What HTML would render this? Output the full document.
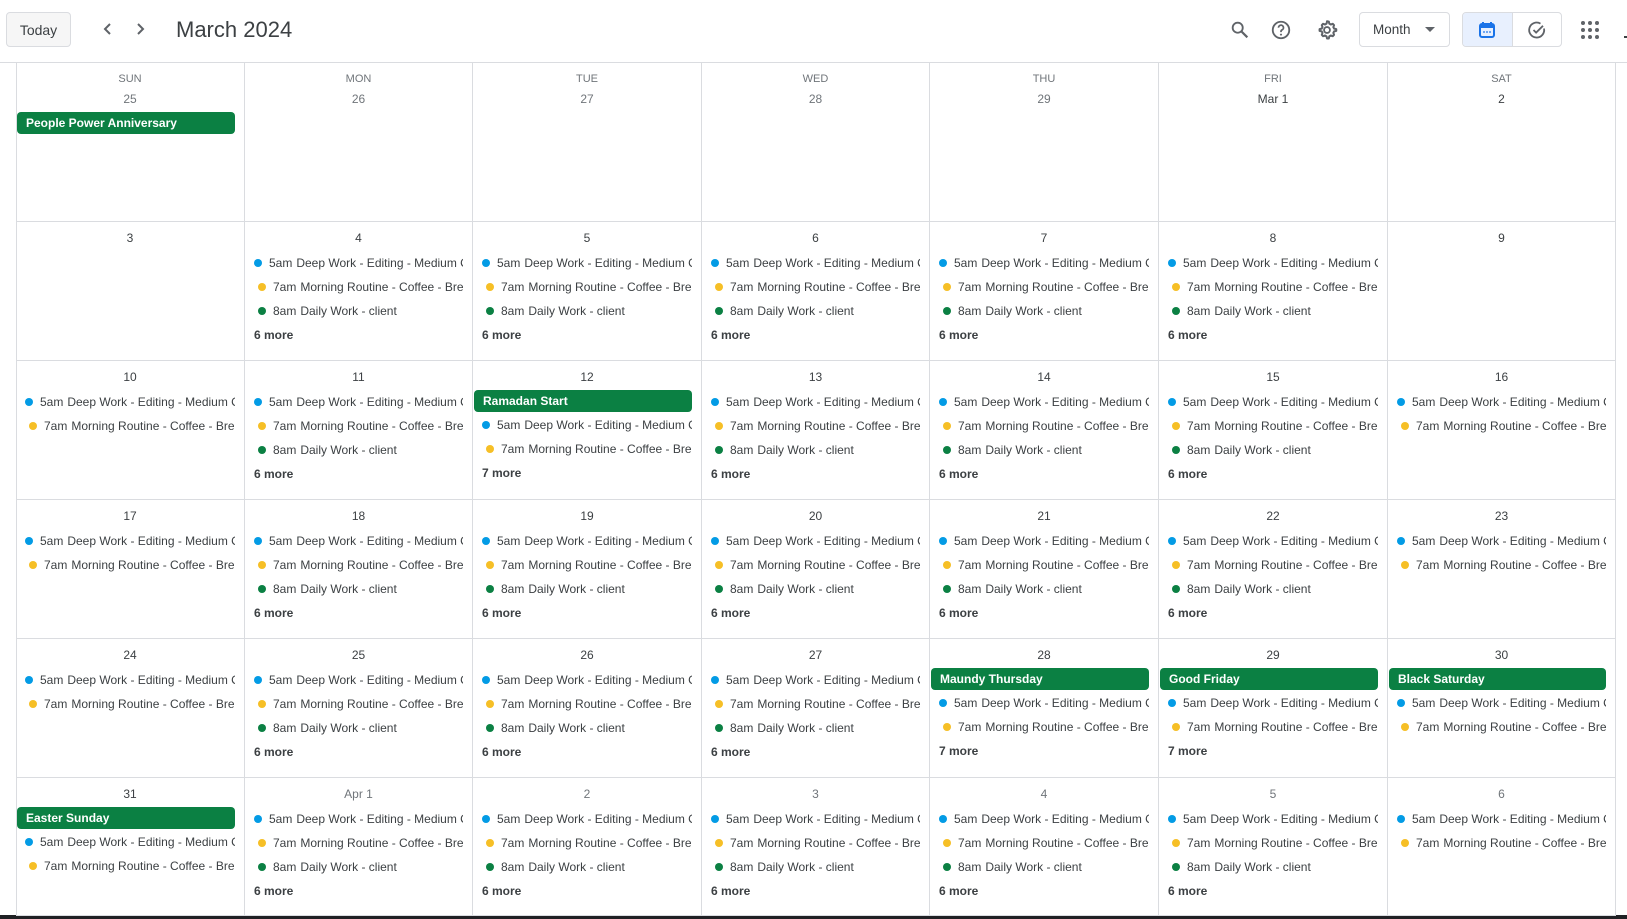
<!DOCTYPE html>
<html><head><meta charset="utf-8"><style>
*{box-sizing:border-box;margin:0;padding:0}
body{width:1627px;height:919px;overflow:hidden;background:#fff;font-family:"Liberation Sans",Arial,sans-serif;color:#3c4043;position:relative}
.hb{position:absolute;border:1px solid #dadce0;border-radius:4px;font-size:14px;display:flex;align-items:center;justify-content:center}
.c{position:absolute;border-right:1px solid #dadce0;border-bottom:1px solid #dadce0;overflow:hidden}
.dn{text-align:center;font-size:11px;color:#70757a;height:14px;line-height:14px;margin-top:9px}
.d{text-align:center;font-size:12px;height:16px;line-height:16px;margin-top:8px;margin-bottom:5px}
.r1 .d{margin-top:5px;margin-bottom:5px}
.g1 .d{color:#70757a}
.e{height:24px;line-height:24px;font-size:12px;white-space:nowrap;overflow:hidden;padding-left:24px;margin-right:9px;position:relative;color:#3c4043}
.e i{position:absolute;left:9px;top:8px;width:8px;height:8px;border-radius:50%;background:#039be5}
.e.y{padding-left:28px}
.e.y i{left:13px;background:#f6bf26}
.e.y i.g{background:#0b8043}
.e s{text-decoration:none;color:#3c4043;margin-left:4px}
.m{height:24px;line-height:24px;font-size:12px;font-weight:bold;padding-left:9px;color:#3c4043}
.ch{height:22px;line-height:22px;margin:1px 9px 1px 1px;background:#0b8043;color:#fff;font-weight:bold;font-size:12px;padding-left:9px;border-radius:4px;white-space:nowrap;overflow:hidden}
</style></head><body>
<div class="hb" style="left:6px;top:12px;width:65px;height:35px;background:#f6f6f6">Today</div>
<svg style="position:absolute;left:100px;top:21px" width="16" height="16" viewBox="0 0 16 16"><path d="M10 3 L5 8 L10 13" fill="none" stroke="#5f6368" stroke-width="2"/></svg>
<svg style="position:absolute;left:132px;top:21px" width="16" height="16" viewBox="0 0 16 16"><path d="M6 3 L11 8 L6 13" fill="none" stroke="#5f6368" stroke-width="2"/></svg>
<div style="position:absolute;left:176px;top:16px;font-size:22px;color:#3c4043;line-height:28px">March 2024</div>
<svg style="position:absolute;left:1229px;top:19px" width="22" height="22" viewBox="0 0 24 24"><circle cx="9.5" cy="9.5" r="5.5" fill="none" stroke="#5f6368" stroke-width="2"/><path d="M13.5 13.5 L20 20" stroke="#5f6368" stroke-width="2.4"/></svg>
<svg style="position:absolute;left:1270px;top:19px" width="22" height="22" viewBox="0 0 24 24"><circle cx="12" cy="12" r="9" fill="none" stroke="#5f6368" stroke-width="2"/><path d="M9.3 9.5a2.7 2.7 0 1 1 3.8 2.4c-.8.4-1.1.9-1.1 1.8v.6" fill="none" stroke="#5f6368" stroke-width="1.9"/><circle cx="12" cy="17" r="1.1" fill="#5f6368"/></svg>
<svg style="position:absolute;left:1316px;top:19px" width="22" height="22" viewBox="0 0 24 24"><path d="M12 2.5l2 .3.5 2.3 1.6.9 2.2-.8 1.4 1.5-.8 2.2.9 1.6 2.3.5v2l-2.3.5-.9 1.6.8 2.2-1.4 1.5-2.2-.8-1.6.9-.5 2.3h-2l-.5-2.3-1.6-.9-2.2.8-1.4-1.5.8-2.2-.9-1.6-2.3-.5v-2l2.3-.5.9-1.6-.8-2.2 1.4-1.5 2.2.8 1.6-.9.5-2.3z" fill="none" stroke="#5f6368" stroke-width="2.2" stroke-linejoin="round"/><circle cx="12" cy="12" r="3.2" fill="none" stroke="#5f6368" stroke-width="2"/></svg>
<div class="hb" style="left:1359px;top:12px;width:91px;height:35px;justify-content:flex-start;padding-left:13px;font-size:13.5px">Month<svg style="margin-left:14px" width="10" height="6"><path d="M0 0h10L5 5z" fill="#5f6368"/></svg></div>
<div class="hb" style="left:1462px;top:12px;width:100px;height:35px;overflow:hidden;justify-content:flex-start">
<div style="width:50px;height:35px;background:#e8f0fe;border-right:1px solid #dadce0;display:flex;align-items:center;justify-content:center"><svg width="18" height="18" viewBox="0 0 18 18"><rect x="2" y="3" width="14" height="13" rx="2" fill="none" stroke="#1a73e8" stroke-width="2"/><rect x="2" y="3" width="14" height="4" fill="#1a73e8"/><path d="M5 1v3M13 1v3" stroke="#1a73e8" stroke-width="2"/><circle cx="6" cy="11" r=".9" fill="#1a73e8"/><circle cx="9" cy="11" r=".9" fill="#1a73e8"/><circle cx="12" cy="11" r=".9" fill="#1a73e8"/></svg></div>
<div style="width:49px;display:flex;justify-content:center"><svg width="20" height="20" viewBox="0 0 20 20"><path d="M17 8.5A7.5 7.5 0 1 1 13.5 3.6" fill="none" stroke="#5f6368" stroke-width="1.8"/><path d="M6.5 10l2.6 2.6L16 5.8" fill="none" stroke="#5f6368" stroke-width="1.8"/></svg></div></div>
<svg style="position:absolute;left:1580px;top:20px" width="20" height="20" viewBox="0 0 20 20"><g fill="#5f6368"><circle cx="3" cy="3" r="2"/><circle cx="10" cy="3" r="2"/><circle cx="17" cy="3" r="2"/><circle cx="3" cy="10" r="2"/><circle cx="10" cy="10" r="2"/><circle cx="17" cy="10" r="2"/><circle cx="3" cy="17" r="2"/><circle cx="10" cy="17" r="2"/><circle cx="17" cy="17" r="2"/></g></svg>
<div style="position:absolute;left:1624px;top:36px;width:3px;height:2px;background:#3c4043"></div>
<div style="position:absolute;left:0;top:62px;width:1627px;height:1px;background:#dadce0"></div>
<div style="position:absolute;left:16px;top:62px;width:1px;height:854px;background:#dadce0"></div>
<div style="position:absolute;left:0;top:915px;width:1627px;height:4px;background:#202124"></div>

<div class="c r1 g1" style="left:16px;top:63px;width:229px;height:159px"><div class="dn">SUN</div><div class="d">25</div><div class="ch">People Power Anniversary</div></div>
<div class="c r1 g1" style="left:245px;top:63px;width:228px;height:159px"><div class="dn">MON</div><div class="d">26</div></div>
<div class="c r1 g1" style="left:473px;top:63px;width:229px;height:159px"><div class="dn">TUE</div><div class="d">27</div></div>
<div class="c r1 g1" style="left:702px;top:63px;width:228px;height:159px"><div class="dn">WED</div><div class="d">28</div></div>
<div class="c r1 g1" style="left:930px;top:63px;width:229px;height:159px"><div class="dn">THU</div><div class="d">29</div></div>
<div class="c r1" style="left:1159px;top:63px;width:229px;height:159px"><div class="dn">FRI</div><div class="d">Mar 1</div></div>
<div class="c r1" style="left:1388px;top:63px;width:228px;height:159px"><div class="dn">SAT</div><div class="d">2</div></div>

<div class="c" style="left:16px;top:222px;width:229px;height:139px"><div class="d">3</div></div>
<div class="c" style="left:245px;top:222px;width:228px;height:139px"><div class="d">4</div><div class="e"><i></i>5am<s>Deep Work - Editing - Medium Clip</s></div><div class="e y"><i></i>7am<s>Morning Routine - Coffee - Breakfast</s></div><div class="e y"><i class="g"></i>8am<s>Daily Work - client</s></div><div class="m">6 more</div></div>
<div class="c" style="left:473px;top:222px;width:229px;height:139px"><div class="d">5</div><div class="e"><i></i>5am<s>Deep Work - Editing - Medium Clip</s></div><div class="e y"><i></i>7am<s>Morning Routine - Coffee - Breakfast</s></div><div class="e y"><i class="g"></i>8am<s>Daily Work - client</s></div><div class="m">6 more</div></div>
<div class="c" style="left:702px;top:222px;width:228px;height:139px"><div class="d">6</div><div class="e"><i></i>5am<s>Deep Work - Editing - Medium Clip</s></div><div class="e y"><i></i>7am<s>Morning Routine - Coffee - Breakfast</s></div><div class="e y"><i class="g"></i>8am<s>Daily Work - client</s></div><div class="m">6 more</div></div>
<div class="c" style="left:930px;top:222px;width:229px;height:139px"><div class="d">7</div><div class="e"><i></i>5am<s>Deep Work - Editing - Medium Clip</s></div><div class="e y"><i></i>7am<s>Morning Routine - Coffee - Breakfast</s></div><div class="e y"><i class="g"></i>8am<s>Daily Work - client</s></div><div class="m">6 more</div></div>
<div class="c" style="left:1159px;top:222px;width:229px;height:139px"><div class="d">8</div><div class="e"><i></i>5am<s>Deep Work - Editing - Medium Clip</s></div><div class="e y"><i></i>7am<s>Morning Routine - Coffee - Breakfast</s></div><div class="e y"><i class="g"></i>8am<s>Daily Work - client</s></div><div class="m">6 more</div></div>
<div class="c" style="left:1388px;top:222px;width:228px;height:139px"><div class="d">9</div></div>

<div class="c" style="left:16px;top:361px;width:229px;height:139px"><div class="d">10</div><div class="e"><i></i>5am<s>Deep Work - Editing - Medium Clip</s></div><div class="e y"><i></i>7am<s>Morning Routine - Coffee - Breakfast</s></div></div>
<div class="c" style="left:245px;top:361px;width:228px;height:139px"><div class="d">11</div><div class="e"><i></i>5am<s>Deep Work - Editing - Medium Clip</s></div><div class="e y"><i></i>7am<s>Morning Routine - Coffee - Breakfast</s></div><div class="e y"><i class="g"></i>8am<s>Daily Work - client</s></div><div class="m">6 more</div></div>
<div class="c" style="left:473px;top:361px;width:229px;height:139px"><div class="d">12</div><div class="ch">Ramadan Start</div><div class="e"><i></i>5am<s>Deep Work - Editing - Medium Clip</s></div><div class="e y"><i></i>7am<s>Morning Routine - Coffee - Breakfast</s></div><div class="m">7 more</div></div>
<div class="c" style="left:702px;top:361px;width:228px;height:139px"><div class="d">13</div><div class="e"><i></i>5am<s>Deep Work - Editing - Medium Clip</s></div><div class="e y"><i></i>7am<s>Morning Routine - Coffee - Breakfast</s></div><div class="e y"><i class="g"></i>8am<s>Daily Work - client</s></div><div class="m">6 more</div></div>
<div class="c" style="left:930px;top:361px;width:229px;height:139px"><div class="d">14</div><div class="e"><i></i>5am<s>Deep Work - Editing - Medium Clip</s></div><div class="e y"><i></i>7am<s>Morning Routine - Coffee - Breakfast</s></div><div class="e y"><i class="g"></i>8am<s>Daily Work - client</s></div><div class="m">6 more</div></div>
<div class="c" style="left:1159px;top:361px;width:229px;height:139px"><div class="d">15</div><div class="e"><i></i>5am<s>Deep Work - Editing - Medium Clip</s></div><div class="e y"><i></i>7am<s>Morning Routine - Coffee - Breakfast</s></div><div class="e y"><i class="g"></i>8am<s>Daily Work - client</s></div><div class="m">6 more</div></div>
<div class="c" style="left:1388px;top:361px;width:228px;height:139px"><div class="d">16</div><div class="e"><i></i>5am<s>Deep Work - Editing - Medium Clip</s></div><div class="e y"><i></i>7am<s>Morning Routine - Coffee - Breakfast</s></div></div>

<div class="c" style="left:16px;top:500px;width:229px;height:139px"><div class="d">17</div><div class="e"><i></i>5am<s>Deep Work - Editing - Medium Clip</s></div><div class="e y"><i></i>7am<s>Morning Routine - Coffee - Breakfast</s></div></div>
<div class="c" style="left:245px;top:500px;width:228px;height:139px"><div class="d">18</div><div class="e"><i></i>5am<s>Deep Work - Editing - Medium Clip</s></div><div class="e y"><i></i>7am<s>Morning Routine - Coffee - Breakfast</s></div><div class="e y"><i class="g"></i>8am<s>Daily Work - client</s></div><div class="m">6 more</div></div>
<div class="c" style="left:473px;top:500px;width:229px;height:139px"><div class="d">19</div><div class="e"><i></i>5am<s>Deep Work - Editing - Medium Clip</s></div><div class="e y"><i></i>7am<s>Morning Routine - Coffee - Breakfast</s></div><div class="e y"><i class="g"></i>8am<s>Daily Work - client</s></div><div class="m">6 more</div></div>
<div class="c" style="left:702px;top:500px;width:228px;height:139px"><div class="d">20</div><div class="e"><i></i>5am<s>Deep Work - Editing - Medium Clip</s></div><div class="e y"><i></i>7am<s>Morning Routine - Coffee - Breakfast</s></div><div class="e y"><i class="g"></i>8am<s>Daily Work - client</s></div><div class="m">6 more</div></div>
<div class="c" style="left:930px;top:500px;width:229px;height:139px"><div class="d">21</div><div class="e"><i></i>5am<s>Deep Work - Editing - Medium Clip</s></div><div class="e y"><i></i>7am<s>Morning Routine - Coffee - Breakfast</s></div><div class="e y"><i class="g"></i>8am<s>Daily Work - client</s></div><div class="m">6 more</div></div>
<div class="c" style="left:1159px;top:500px;width:229px;height:139px"><div class="d">22</div><div class="e"><i></i>5am<s>Deep Work - Editing - Medium Clip</s></div><div class="e y"><i></i>7am<s>Morning Routine - Coffee - Breakfast</s></div><div class="e y"><i class="g"></i>8am<s>Daily Work - client</s></div><div class="m">6 more</div></div>
<div class="c" style="left:1388px;top:500px;width:228px;height:139px"><div class="d">23</div><div class="e"><i></i>5am<s>Deep Work - Editing - Medium Clip</s></div><div class="e y"><i></i>7am<s>Morning Routine - Coffee - Breakfast</s></div></div>

<div class="c" style="left:16px;top:639px;width:229px;height:139px"><div class="d">24</div><div class="e"><i></i>5am<s>Deep Work - Editing - Medium Clip</s></div><div class="e y"><i></i>7am<s>Morning Routine - Coffee - Breakfast</s></div></div>
<div class="c" style="left:245px;top:639px;width:228px;height:139px"><div class="d">25</div><div class="e"><i></i>5am<s>Deep Work - Editing - Medium Clip</s></div><div class="e y"><i></i>7am<s>Morning Routine - Coffee - Breakfast</s></div><div class="e y"><i class="g"></i>8am<s>Daily Work - client</s></div><div class="m">6 more</div></div>
<div class="c" style="left:473px;top:639px;width:229px;height:139px"><div class="d">26</div><div class="e"><i></i>5am<s>Deep Work - Editing - Medium Clip</s></div><div class="e y"><i></i>7am<s>Morning Routine - Coffee - Breakfast</s></div><div class="e y"><i class="g"></i>8am<s>Daily Work - client</s></div><div class="m">6 more</div></div>
<div class="c" style="left:702px;top:639px;width:228px;height:139px"><div class="d">27</div><div class="e"><i></i>5am<s>Deep Work - Editing - Medium Clip</s></div><div class="e y"><i></i>7am<s>Morning Routine - Coffee - Breakfast</s></div><div class="e y"><i class="g"></i>8am<s>Daily Work - client</s></div><div class="m">6 more</div></div>
<div class="c" style="left:930px;top:639px;width:229px;height:139px"><div class="d">28</div><div class="ch">Maundy Thursday</div><div class="e"><i></i>5am<s>Deep Work - Editing - Medium Clip</s></div><div class="e y"><i></i>7am<s>Morning Routine - Coffee - Breakfast</s></div><div class="m">7 more</div></div>
<div class="c" style="left:1159px;top:639px;width:229px;height:139px"><div class="d">29</div><div class="ch">Good Friday</div><div class="e"><i></i>5am<s>Deep Work - Editing - Medium Clip</s></div><div class="e y"><i></i>7am<s>Morning Routine - Coffee - Breakfast</s></div><div class="m">7 more</div></div>
<div class="c" style="left:1388px;top:639px;width:228px;height:139px"><div class="d">30</div><div class="ch">Black Saturday</div><div class="e"><i></i>5am<s>Deep Work - Editing - Medium Clip</s></div><div class="e y"><i></i>7am<s>Morning Routine - Coffee - Breakfast</s></div></div>

<div class="c" style="left:16px;top:778px;width:229px;height:138px"><div class="d">31</div><div class="ch">Easter Sunday</div><div class="e"><i></i>5am<s>Deep Work - Editing - Medium Clip</s></div><div class="e y"><i></i>7am<s>Morning Routine - Coffee - Breakfast</s></div></div>
<div class="c g1" style="left:245px;top:778px;width:228px;height:138px"><div class="d">Apr 1</div><div class="e"><i></i>5am<s>Deep Work - Editing - Medium Clip</s></div><div class="e y"><i></i>7am<s>Morning Routine - Coffee - Breakfast</s></div><div class="e y"><i class="g"></i>8am<s>Daily Work - client</s></div><div class="m">6 more</div></div>
<div class="c g1" style="left:473px;top:778px;width:229px;height:138px"><div class="d">2</div><div class="e"><i></i>5am<s>Deep Work - Editing - Medium Clip</s></div><div class="e y"><i></i>7am<s>Morning Routine - Coffee - Breakfast</s></div><div class="e y"><i class="g"></i>8am<s>Daily Work - client</s></div><div class="m">6 more</div></div>
<div class="c g1" style="left:702px;top:778px;width:228px;height:138px"><div class="d">3</div><div class="e"><i></i>5am<s>Deep Work - Editing - Medium Clip</s></div><div class="e y"><i></i>7am<s>Morning Routine - Coffee - Breakfast</s></div><div class="e y"><i class="g"></i>8am<s>Daily Work - client</s></div><div class="m">6 more</div></div>
<div class="c g1" style="left:930px;top:778px;width:229px;height:138px"><div class="d">4</div><div class="e"><i></i>5am<s>Deep Work - Editing - Medium Clip</s></div><div class="e y"><i></i>7am<s>Morning Routine - Coffee - Breakfast</s></div><div class="e y"><i class="g"></i>8am<s>Daily Work - client</s></div><div class="m">6 more</div></div>
<div class="c g1" style="left:1159px;top:778px;width:229px;height:138px"><div class="d">5</div><div class="e"><i></i>5am<s>Deep Work - Editing - Medium Clip</s></div><div class="e y"><i></i>7am<s>Morning Routine - Coffee - Breakfast</s></div><div class="e y"><i class="g"></i>8am<s>Daily Work - client</s></div><div class="m">6 more</div></div>
<div class="c g1" style="left:1388px;top:778px;width:228px;height:138px"><div class="d">6</div><div class="e"><i></i>5am<s>Deep Work - Editing - Medium Clip</s></div><div class="e y"><i></i>7am<s>Morning Routine - Coffee - Breakfast</s></div></div>
</body></html>
